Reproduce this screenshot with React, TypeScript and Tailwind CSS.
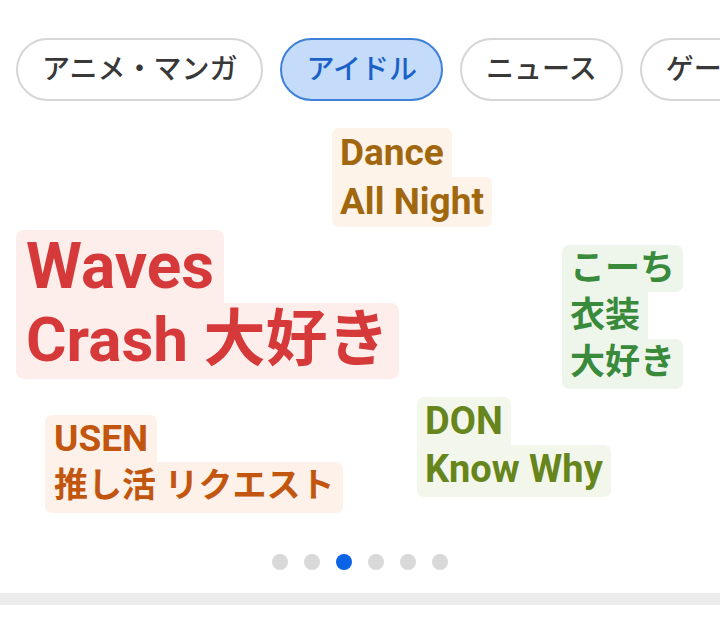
import React from "react";

type Line = { text: string; cls: string };

function Cloud({ pos, text, lines }: { pos: string; text: string; lines: Line[] }) {
  return (
    <div className={"absolute flex flex-col items-start font-bold " + pos + " " + text}>
      {lines.map((l, i) => (
        <div key={i} className={"w-fit whitespace-nowrap " + l.cls}>
          {l.text}
        </div>
      ))}
    </div>
  );
}

const chips = [
  { label: "アニメ・マンガ", active: false },
  { label: "アイドル", active: true },
  { label: "ニュース", active: false },
  { label: "ゲーム", active: false },
];

export default function App() {
  return (
    <div
      className="w-[720px] h-[625px] bg-white overflow-hidden"
      style={{ fontFamily: 'Roboto, "Noto Sans CJK JP", sans-serif' }}
    >
      <div className="h-[6px] overflow-hidden pl-[13px]">
        <div className="-mt-[26px] text-[24px] leading-[30px] text-[#555]">人気</div>
      </div>

      <div className="mt-[32px] flex gap-[17px] pl-[16px] overflow-hidden whitespace-nowrap">
        {chips.map((c) => (
          <div
            key={c.label}
            className={
              c.active
                ? "shrink-0 h-[63px] rounded-full border-2 border-[#3f80d8] bg-[#c4dcf9] px-[24px] flex items-center text-[28px] font-medium text-[#1a62c8]"
                : "shrink-0 h-[63px] rounded-full border-2 border-[#d6d6d6] bg-white px-[24px] flex items-center text-[28px] font-medium text-[#383838]"
            }
          >
            {c.label}
          </div>
        ))}
      </div>

      <div className="relative h-[429px]">
        <Cloud
          pos="left-[332px] top-[27px] leading-[49px]"
          text="text-[#a1670f]"
          lines={[
            { text: "Dance", cls: "px-2 text-[37px] bg-[#fdf3e8] rounded-t-[7px]" },
            { text: "All Night", cls: "px-2 text-[37px] pb-[1px] bg-[#fdf3e8] rounded-b-[7px] rounded-tr-[7px]" },
          ]}
        />
        <Cloud
          pos="left-[16px] top-[129px] leading-[73px]"
          text="text-[#d63939]"
          lines={[
            { text: "Waves", cls: "px-[10px] text-[64px] bg-[#fdeeec] rounded-t-[8px]" },
            { text: "Crash 大好き", cls: "px-[10px] text-[62px] pb-[3px] bg-[#fdeeec] rounded-b-[8px] rounded-tr-[8px]" },
          ]}
        />
        <Cloud
          pos="left-[562px] top-[144px] text-[35px] leading-[47px]"
          text="text-[#3a8a3c]"
          lines={[
            { text: "こーち", cls: "px-2 bg-[#eef6ec] rounded-t-[7px] rounded-br-[7px]" },
            { text: "衣装", cls: "px-2 bg-[#eef6ec]" },
            { text: "大好き", cls: "px-2 pb-[3px] bg-[#eef6ec] rounded-b-[7px] rounded-tr-[7px]" },
          ]}
        />
        <Cloud
          pos="left-[45px] top-[314px] leading-[47px]"
          text="text-[#c2560f]"
          lines={[
            { text: "USEN", cls: "px-[9px] text-[37px] bg-[#fdf1ea] rounded-t-[7px]" },
            { text: "推し活 リクエスト", cls: "px-[9px] text-[34px] pb-[4px] bg-[#fdf1ea] rounded-b-[7px] rounded-tr-[7px]" },
          ]}
        />
        <Cloud
          pos="left-[417px] top-[296px] leading-[48px]"
          text="text-[#66851c]"
          lines={[
            { text: "DON", cls: "px-2 text-[38px] bg-[#f3f6ea] rounded-t-[7px]" },
            { text: "Know Why", cls: "px-2 text-[38px] pb-[4px] bg-[#f3f6ea] rounded-b-[7px] rounded-tr-[7px]" },
          ]}
        />
      </div>

      <div className="mt-[24px] flex justify-center gap-4">
        <div className="h-4 w-4 rounded-full bg-[#d9d9d9]" />
        <div className="h-4 w-4 rounded-full bg-[#d9d9d9]" />
        <div className="h-4 w-4 rounded-full bg-[#0b63e5]" />
        <div className="h-4 w-4 rounded-full bg-[#d9d9d9]" />
        <div className="h-4 w-4 rounded-full bg-[#d9d9d9]" />
        <div className="h-4 w-4 rounded-full bg-[#d9d9d9]" />
      </div>

      <div className="mt-[23px] h-[12px] bg-[#ececec]" />
    </div>
  );
}
